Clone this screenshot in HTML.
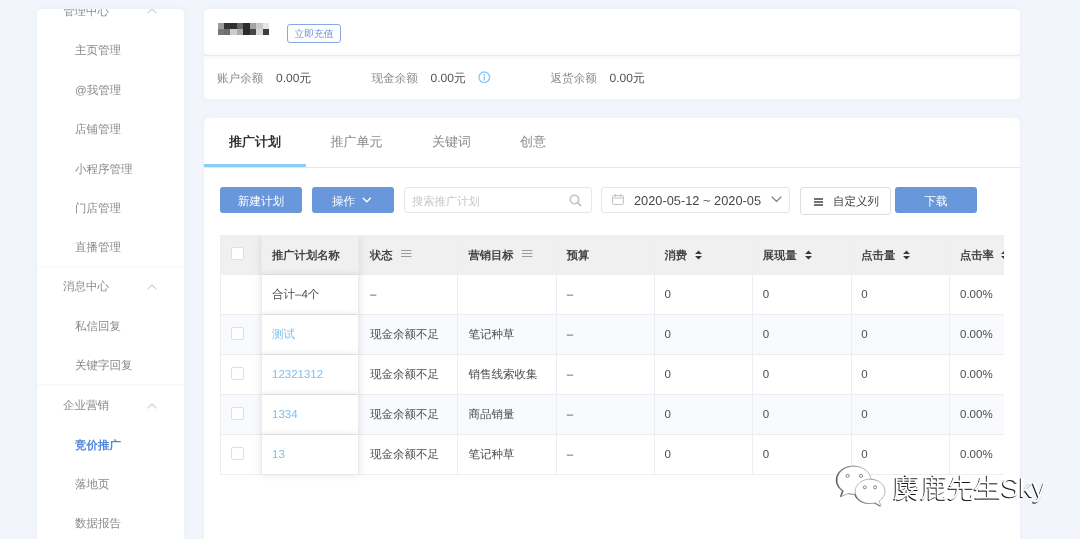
<!DOCTYPE html>
<html><head><meta charset="utf-8">
<style>
*{margin:0;padding:0;box-sizing:border-box}
html,body{width:1080px;height:539px;overflow:hidden}
.wrap{position:absolute;left:0;top:0;width:1080px;height:539px;will-change:transform}
body{background:#f2f5fb;font-family:"Liberation Sans",sans-serif;position:relative;color:#333;text-rendering:geometricPrecision}
.abs{position:absolute;white-space:nowrap}
.card{position:absolute;background:#fff;border-radius:5px;box-shadow:0 0 6px rgba(175,185,205,.10)}
/* sidebar */
.side{left:37px;top:9px;width:147px;height:560px;overflow:hidden}
.si{position:absolute;left:38px;font-size:11.5px;line-height:14px;color:#8a8a8a;margin-top:-6.3px}
.sh{position:absolute;left:26px;font-size:11.5px;line-height:14px;color:#8a8a8a;margin-top:-6.3px}
.chev{position:absolute;left:109.5px;width:11px;height:6px;margin-top:-2.9px}
.sdiv{position:absolute;left:0;width:147px;height:2px;background:#f7f9fc;margin-top:-.5px}
/* top */
.t12{font-size:11.6px;line-height:14px}
.lbl{color:#8a8a8a}
.val{color:#505050;font-size:12px!important;margin-top:-.7px}
/* tabs */
.tab{position:absolute;top:134px;font-size:13px;line-height:15px;color:#8a8a8a}
.btn{position:absolute;top:187px;height:26px;border-radius:3px;background:#6897dc;color:#fff;font-size:11.6px;line-height:29px;text-align:center}
.inp{position:absolute;top:187px;height:26px;border:1px solid #e6e6e6;border-radius:3px;background:#fff}
/* table */
.tbl{position:absolute;left:220px;top:235px;width:784px;height:260px;overflow:hidden;z-index:0}
.row{position:absolute;left:0;width:800px;height:40px;border-bottom:1px solid #eceef2;border-left:1px solid #eceef2}
.hd{background:#f0f0f0}
.alt{background:#f8fafd}
.vs{position:absolute;width:1px;background:#eceef2;z-index:1}
.hc{position:absolute;top:0;height:40px;line-height:42px;font-size:11.3px;font-weight:bold;color:#444;white-space:nowrap}
.bc{position:absolute;top:0;height:40px;line-height:40px;font-size:11.5px;color:#4d4d4d;white-space:nowrap}
.ic{position:absolute}
.cb{position:absolute;left:10px;top:12px;width:13px;height:13px;border:1px solid #e0e0e0;background:#fff;border-radius:2px}
.fc{position:absolute;left:40.5px;width:98.5px;height:40px;line-height:40px;background:#fff;font-size:11.5px;color:#4d4d4d;padding-left:10.5px;border-bottom:1px solid #e6e8ed;border-left:1px solid #e9ebef;border-right:1px solid #e9ebef;box-shadow:0 0 8px rgba(0,0,0,.11);z-index:2;white-space:nowrap}
.hdc{background:#f0f0f0;font-weight:bold;color:#444;font-size:11.3px;line-height:42px!important}
.lnk{color:#7cc0f2}
</style></head><body><div class="wrap">

<!-- SIDEBAR -->
<div class="card side">
  <div class="sh" style="top:2px">管理中心</div>
  <svg class="chev" style="top:2px" viewBox="0 0 11 6"><path d="M.6 5.4 L5 1 L9.4 5.4" fill="none" stroke="#d4d4d4" stroke-width="1.3"/></svg>
  <div class="si" style="top:41.5px">主页管理</div>
  <div class="si" style="top:81px">@我管理</div>
  <div class="si" style="top:120.4px">店铺管理</div>
  <div class="si" style="top:159.8px">小程序管理</div>
  <div class="si" style="top:199.2px">门店管理</div>
  <div class="si" style="top:238.6px">直播管理</div>
  <div class="sdiv" style="top:257px"></div>
  <div class="sh" style="top:277.4px">消息中心</div>
  <svg class="chev" style="top:277.4px" viewBox="0 0 11 6"><path d="M.6 5.4 L5 1 L9.4 5.4" fill="none" stroke="#d4d4d4" stroke-width="1.3"/></svg>
  <div class="si" style="top:316.8px">私信回复</div>
  <div class="si" style="top:356.2px">关键字回复</div>
  <div class="sdiv" style="top:375.7px"></div>
  <div class="sh" style="top:396.6px">企业营销</div>
  <svg class="chev" style="top:396.6px" viewBox="0 0 11 6"><path d="M.6 5.4 L5 1 L9.4 5.4" fill="none" stroke="#d4d4d4" stroke-width="1.3"/></svg>
  <div class="si" style="top:435.8px;color:#5286dc;font-weight:bold">竞价推广</div>
  <div class="si" style="top:475px">落地页</div>
  <div class="si" style="top:514.4px">数据报告</div>
</div>

<!-- TOP CARD -->
<div class="card" style="left:204px;top:9px;width:816px;height:46px"></div>
<div class="card" style="left:204px;top:56px;width:816px;height:43px;border-radius:0 0 4px 4px;background:linear-gradient(#f7f7f9,#fff 5px)"></div>
<div class="abs" style="left:204px;top:55px;width:816px;height:1px;background:#e9eaee"></div>
<!-- mosaic -->
<div class="abs" style="left:217.5px;top:23px;width:51.6px;height:12.4px;display:grid;grid-template-columns:repeat(8,1fr);grid-template-rows:repeat(2,1fr);filter:blur(.45px)"><i style="background:#9c9c9c"></i><i style="background:#353535"></i><i style="background:#2f2f2f"></i><i style="background:#676767"></i><i style="background:#2b2b2b"></i><i style="background:#a3a3a3"></i><i style="background:#c9c9c9"></i><i style="background:#e6e6e6"></i><i style="background:#777"></i><i style="background:#6e6e6e"></i><i style="background:#cdcdcd"></i><i style="background:#ababab"></i><i style="background:#2b2b2b"></i><i style="background:#474747"></i><i style="background:#d6d6d6"></i><i style="background:#3c3c3c"></i></div>
<div class="abs" style="left:287px;top:24px;width:54px;height:19px;border:1px solid #86a9e4;border-radius:3px;font-size:9.8px;line-height:19.5px;color:#6a95dc;text-align:center">立即充值</div>

<div class="abs t12 lbl" style="left:217px;top:71.7px">账户余额</div>
<div class="abs t12 val" style="left:276px;top:71.7px">0.00元</div>
<div class="abs t12 lbl" style="left:371.5px;top:71.7px">现金余额</div>
<div class="abs t12 val" style="left:430.5px;top:71.7px">0.00元</div>
<svg class="abs" style="left:477.5px;top:70.5px" width="13" height="13" viewBox="0 0 13 13"><circle cx="6.3" cy="6.3" r="5.3" fill="none" stroke="#8ccaf5" stroke-width="1.4"/><circle cx="6.3" cy="3.7" r=".9" fill="#8ccaf5"/><rect x="5.6" y="5.2" width="1.4" height="4.3" fill="#8ccaf5"/></svg>
<div class="abs t12 lbl" style="left:550.5px;top:71.7px">返货余额</div>
<div class="abs t12 val" style="left:609.5px;top:71.7px">0.00元</div>

<!-- MAIN CARD -->
<div class="card" style="left:204px;top:118px;width:816px;height:450px"></div>
<div class="tab" style="left:229px;color:#333;font-weight:bold">推广计划</div>
<div class="tab" style="left:330.5px">推广单元</div>
<div class="tab" style="left:432px">关键词</div>
<div class="tab" style="left:520px">创意</div>
<div class="abs" style="left:204px;top:166.5px;width:816px;height:1.3px;background:#e8e8e8"></div>
<div class="abs" style="left:204px;top:164.4px;width:101.5px;height:3px;background:#8ccdf6"></div>

<div class="btn" style="left:220px;width:82px">新建计划</div>
<div class="btn" style="left:312px;width:82px;text-align:left;padding-left:20px">操作<svg style="position:absolute;left:50px;top:10.3px" width="10" height="6" viewBox="0 0 10 6"><path d="M0.8 0.8 L4.8 4.8 L8.8 0.8" fill="none" stroke="#fff" stroke-width="1.3"/></svg></div>
<div class="inp" style="left:404px;width:188px">
  <div class="abs" style="left:7px;top:6.5px;font-size:11.3px;line-height:14px;color:#c8c8c8">搜索推广计划</div>
  <svg class="abs" style="left:164px;top:6.3px" width="13" height="13" viewBox="0 0 13 13"><circle cx="5.5" cy="5.5" r="4.2" fill="none" stroke="#c2c2c2" stroke-width="1.6"/><path d="M8.6 8.6 L11.6 11.6" stroke="#c2c2c2" stroke-width="1.7" stroke-linecap="round"/></svg>
</div>
<div class="inp" style="left:601px;width:189px">
  <svg class="abs" style="left:9.8px;top:6px" width="12" height="11" viewBox="0 0 12 11"><rect x=".6" y="1.6" width="10.8" height="8.8" rx="1" fill="none" stroke="#c0c0c0" stroke-width="1"/><path d="M.6 4 H11.4 M3.5 0 V2.5 M8.5 0 V2.5" stroke="#c0c0c0" stroke-width="1"/></svg>
  <div class="abs" style="left:32px;top:4.5px;font-size:12.8px;line-height:15px;color:#484848">2020-05-12 ~ 2020-05</div>
  <svg class="abs" style="left:169px;top:8px" width="11" height="7" viewBox="0 0 11 7"><path d="M0.7 0.7 L5.5 5.5 L10.3 0.7" fill="none" stroke="#777" stroke-width="1.2"/></svg>
</div>
<div class="inp" style="left:800px;top:187px;width:91px;height:28px;border-color:#dedede">
  <svg class="abs" style="left:13px;top:10px" width="9" height="8" viewBox="0 0 9 8"><path d="M0 1 H9 M0 4 H9 M0 7 H9" stroke="#444" stroke-width="1.4"/></svg>
  <div class="abs" style="left:32px;top:7px;font-size:11.5px;line-height:14px;color:#444">自定义列</div>
</div>
<div class="btn" style="left:895px;width:82px">下载</div>

<!-- TABLE -->
<div class="tbl">
<div class="row hd" style="top:0;height:40px"><div class="cb" style="top:12px;left:10px"></div>
<div class="hc" style="left:149.0px">状态<svg class="ic" style="left:31.30000000000001px;top:14px" width="11" height="9" viewBox="0 0 11 9"><path d="M0 1.5 H10.4 M0 4.5 H10.4 M0 7.5 H10.4" stroke="#9c9c9c" stroke-width="1.15"/></svg></div>
<div class="hc" style="left:247.4px">营销目标<svg class="ic" style="left:54.10000000000002px;top:14px" width="11" height="9" viewBox="0 0 11 9"><path d="M0 1.5 H10.4 M0 4.5 H10.4 M0 7.5 H10.4" stroke="#9c9c9c" stroke-width="1.15"/></svg></div>
<div class="hc" style="left:345.8px">预算</div>
<div class="hc" style="left:443.4px">消费<svg class="ic" style="left:31.0px;top:15px" width="7" height="10" viewBox="0 0 7 10"><path d="M3.5 .4 L7 4.1 H0Z M3.5 9.6 L7 5.9 H0Z" fill="#3a3a3a"/></svg></div>
<div class="hc" style="left:541.8px">展现量<svg class="ic" style="left:42.200000000000045px;top:15px" width="7" height="10" viewBox="0 0 7 10"><path d="M3.5 .4 L7 4.1 H0Z M3.5 9.6 L7 5.9 H0Z" fill="#3a3a3a"/></svg></div>
<div class="hc" style="left:640.3px">点击量<svg class="ic" style="left:42.0px;top:15px" width="7" height="10" viewBox="0 0 7 10"><path d="M3.5 .4 L7 4.1 H0Z M3.5 9.6 L7 5.9 H0Z" fill="#3a3a3a"/></svg></div>
<div class="hc" style="left:739.0px">点击率<svg class="ic" style="left:41.39999999999998px;top:15px" width="7" height="10" viewBox="0 0 7 10"><path d="M3.5 .4 L7 4.1 H0Z M3.5 9.6 L7 5.9 H0Z" fill="#3a3a3a"/></svg></div>
</div>
<div class="row" style="top:40px">
<div class="bc" style="left:149.0px">–</div>
<div class="bc" style="left:247.4px"></div>
<div class="bc" style="left:345.8px">–</div>
<div class="bc" style="left:443.4px">0</div>
<div class="bc" style="left:541.8px">0</div>
<div class="bc" style="left:640.3px">0</div>
<div class="bc" style="left:739.0px">0.00%</div>
</div>
<div class="row alt" style="top:80px">
<div class="cb"></div>
<div class="bc" style="left:149.0px">现金余额不足</div>
<div class="bc" style="left:247.4px">笔记种草</div>
<div class="bc" style="left:345.8px">–</div>
<div class="bc" style="left:443.4px">0</div>
<div class="bc" style="left:541.8px">0</div>
<div class="bc" style="left:640.3px">0</div>
<div class="bc" style="left:739.0px">0.00%</div>
</div>
<div class="row" style="top:120px">
<div class="cb"></div>
<div class="bc" style="left:149.0px">现金余额不足</div>
<div class="bc" style="left:247.4px">销售线索收集</div>
<div class="bc" style="left:345.8px">–</div>
<div class="bc" style="left:443.4px">0</div>
<div class="bc" style="left:541.8px">0</div>
<div class="bc" style="left:640.3px">0</div>
<div class="bc" style="left:739.0px">0.00%</div>
</div>
<div class="row alt" style="top:160px">
<div class="cb"></div>
<div class="bc" style="left:149.0px">现金余额不足</div>
<div class="bc" style="left:247.4px">商品销量</div>
<div class="bc" style="left:345.8px">–</div>
<div class="bc" style="left:443.4px">0</div>
<div class="bc" style="left:541.8px">0</div>
<div class="bc" style="left:640.3px">0</div>
<div class="bc" style="left:739.0px">0.00%</div>
</div>
<div class="row" style="top:200px">
<div class="cb"></div>
<div class="bc" style="left:149.0px">现金余额不足</div>
<div class="bc" style="left:247.4px">笔记种草</div>
<div class="bc" style="left:345.8px">–</div>
<div class="bc" style="left:443.4px">0</div>
<div class="bc" style="left:541.8px">0</div>
<div class="bc" style="left:640.3px">0</div>
<div class="bc" style="left:739.0px">0.00%</div>
</div>
<div class="vs" style="left:237.3px;top:0px;height:240px"></div><div class="vs" style="left:335.5px;top:0px;height:240px"></div><div class="vs" style="left:434.0px;top:0px;height:240px"></div><div class="vs" style="left:532.4px;top:0px;height:240px"></div><div class="vs" style="left:631.2px;top:0px;height:240px"></div><div class="vs" style="left:729.4px;top:0px;height:240px"></div>
<div class="fc hdc" style="top:0;height:40px">推广计划名称</div>
<div class="fc" style="top:40px">合计–4个</div>
<div class="fc lnk" style="top:80px">测试</div>
<div class="fc lnk" style="top:120px">12321312</div>
<div class="fc lnk" style="top:160px">1334</div>
<div class="fc lnk" style="top:200px">13</div>
</div>

<!-- WATERMARK -->
<svg class="abs" style="left:835px;top:464px;z-index:5;filter:drop-shadow(-.6px .6px .3px rgba(0,0,0,.75))" width="52" height="44" viewBox="0 0 52 44">
  <path d="M19 2.2 C9.6 2.2 2.2 8.4 2.2 16 C2.2 20.4 4.6 24.2 8.4 26.8 L6.4 32.6 L13.2 29.4 C15.1 29.9 17 30.1 19 30.1 C28.4 30.1 35.8 23.8 35.8 16 C35.8 8.4 28.4 2.2 19 2.2Z" fill="#fff" stroke="#9a9a9a" stroke-width=".7"/>
  <path d="M35 15.2 C26.6 15.2 20.2 20.7 20.2 27.4 C20.2 34 26.6 39.5 35 39.5 C36.8 39.5 38.4 39.3 40 38.8 L46 42.2 L44.2 37 C47.8 34.7 50 31.2 50 27.4 C50 20.7 43.4 15.2 35 15.2Z" fill="#fff" stroke="#9a9a9a" stroke-width=".7"/>
  <circle cx="12.6" cy="11.8" r="1.6" fill="#fff" stroke="#777" stroke-width=".9"/>
  <circle cx="26" cy="11.8" r="1.6" fill="#fff" stroke="#777" stroke-width=".9"/>
  <circle cx="29.8" cy="23.3" r="1.5" fill="#fff" stroke="#777" stroke-width=".9"/>
  <circle cx="40.1" cy="23.3" r="1.5" fill="#fff" stroke="#777" stroke-width=".9"/>
</svg>
<div class="abs" style="left:893px;top:471.5px;font-size:27px;line-height:32px;color:#fff;text-shadow:-1px 1px .5px rgba(0,0,0,.8),-.5px .5px .5px rgba(0,0,0,.5);z-index:5">麋鹿先生Sky</div>

</div></body></html>
